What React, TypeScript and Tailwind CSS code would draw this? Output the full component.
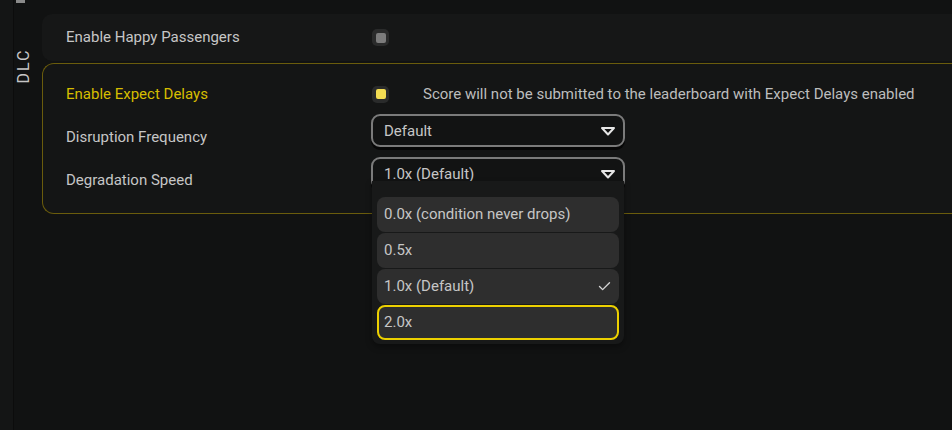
import { Check } from "lucide-react";

const labelCls = "text-[15px] text-[#c6c6c6]";

function Arrow() {
  return (
    <svg width="16" height="10" viewBox="0 0 16 10" className="mr-[7px]">
      <path d="M2 2 H14 L8 8.5 Z" fill="none" stroke="#e6e6e6" strokeWidth="2" strokeLinejoin="round" />
    </svg>
  );
}

function Select({ value }: { value: string }) {
  return (
    <div className="flex h-[33px] w-[254px] items-center justify-between rounded-[9px] border-2 border-[#7b7b7b] bg-[#121313] pl-[11px] shadow-[0_3px_0_#070707]">
      <span className={`${labelCls} pt-[2px]`}>{value}</span>
      <Arrow />
    </div>
  );
}

function Box({ on }: { on?: boolean }) {
  return (
    <div className="flex h-[17px] w-[17px] items-center justify-center rounded-[5px] bg-[#2a2b2b]">
      <div className={on ? "h-[10px] w-[10px] rounded-[2px] bg-[#f2dc52]" : "h-[10px] w-[10px] rounded-[2px] bg-[#7c7c7c]"} />
    </div>
  );
}

const options = ["0.0x (condition never drops)", "0.5x", "1.0x (Default)", "2.0x"];

export default function App() {
  return (
    <div className="flex h-[430px] w-[952px] overflow-hidden bg-[#111212] font-['Roboto',sans-serif]">
      {/* side rail */}
      <div className="flex w-[42px] shrink-0">
        <div className="w-[14px] border-r border-[#0c0c0c] bg-[#141515]" />
        <div className="relative flex-1">
          <div className="absolute left-[2px] top-0 h-[3px] w-[9px] bg-[#8a8a8a]" />
          <span className="absolute left-[-8px] top-[54px] -rotate-90 text-[16px] tracking-[2px] text-[#c6c6c6]">DLC</span>
        </div>
      </div>

      <div className="flex flex-1 flex-col pt-[14px]">
        <div className="grid h-[47px] grid-cols-[306px_1fr] items-center rounded-l-[10px] bg-[#161717] pl-[24px]">
          <span className={labelCls}>Enable Happy Passengers</span>
          <Box />
        </div>

        <div className="mt-[2px] flex flex-col rounded-l-[12px] border border-r-0 border-[#6a5c0c] bg-[#141515] pb-[23px] pl-[23px] pt-[12px]">
          <div className="grid h-[36px] grid-cols-[306px_auto_1fr] items-center">
            <span className="text-[15px] text-[#d6bd00]">Enable Expect Delays</span>
            <Box on />
            <span className="pl-[34px] text-[15px] text-[#bdbdbd]">
              Score will not be submitted to the leaderboard with Expect Delays enabled
            </span>
          </div>
          <div className="mt-[2px] grid grid-cols-[305px_auto] items-center">
            <span className={`${labelCls} relative top-[7px]`}>Disruption Frequency</span>
            <Select value="Default" />
          </div>
          <div className="mt-[10px] grid grid-cols-[305px_auto] items-center">
            <span className={`${labelCls} relative top-[7px]`}>Degradation Speed</span>
            <div className="relative">
              <Select value="1.0x (Default)" />
              <div className="absolute left-[1px] top-[24px] z-10 flex w-[252px] flex-col gap-[1px] rounded-b-[8px] bg-[#181919] px-[5px] pb-[4px] pt-[16px] shadow-[0_3px_6px_rgba(0,0,0,0.35)]">
                {options.map((o, i) => (
                  <div
                    key={o}
                    className={
                      i === 3
                        ? "flex h-[35px] items-center justify-between rounded-[8px] border-2 border-[#ecd000] bg-[#2e2e2e] px-[5px]"
                        : "flex h-[35px] items-center justify-between rounded-[8px] bg-[#2e2e2e] px-[7px]"
                    }
                  >
                    <span className={labelCls}>{o}</span>
                    {i === 2 && <Check size={15} strokeWidth={2.2} className="text-[#d4d4d4]" />}
                  </div>
                ))}
              </div>
            </div>
          </div>
        </div>
      </div>
    </div>
  );
}
